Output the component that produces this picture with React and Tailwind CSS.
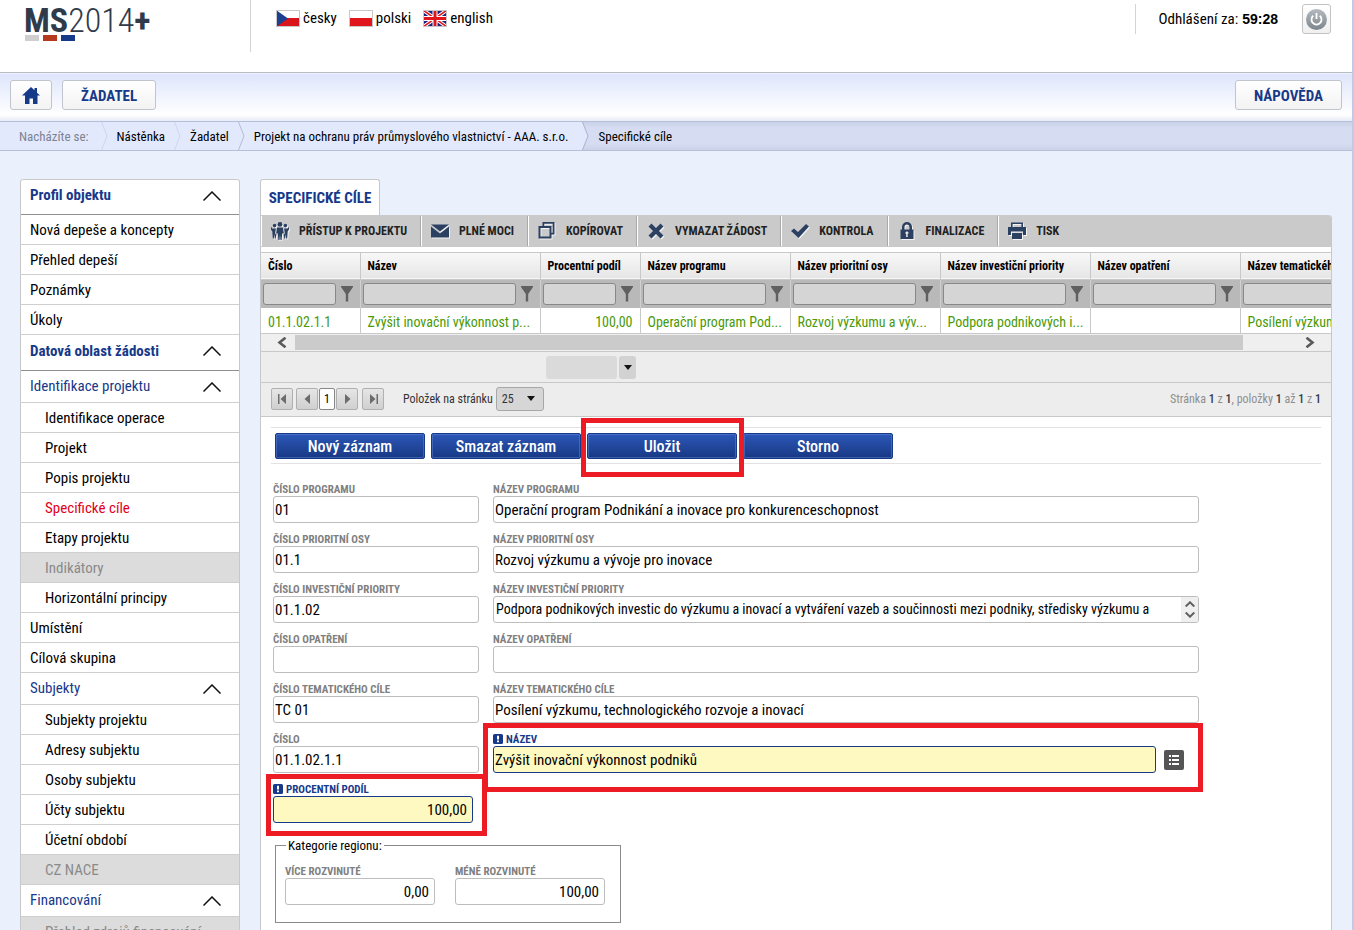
import React from 'react';
import clsx from 'clsx';

const menu = [
    { label: 'Profil objektu', type: 'section' },
    { label: 'Nová depeše a koncepty' },
    { label: 'Přehled depeší' },
    { label: 'Poznámky' },
    { label: 'Úkoly' },
    { label: 'Datová oblast žádosti', type: 'section' },
    { label: 'Identifikace projektu', type: 'group' },
    { label: 'Identifikace operace', nested: true },
    { label: 'Projekt', nested: true },
    { label: 'Popis projektu', nested: true },
    { label: 'Specifické cíle', nested: true, active: true },
    { label: 'Etapy projektu', nested: true },
    { label: 'Indikátory', nested: true, disabled: true },
    { label: 'Horizontální principy', nested: true },
    { label: 'Umístění' },
    { label: 'Cílová skupina' },
    { label: 'Subjekty', type: 'group' },
    { label: 'Subjekty projektu', nested: true },
    { label: 'Adresy subjektu', nested: true },
    { label: 'Osoby subjektu', nested: true },
    { label: 'Účty subjektu', nested: true },
    { label: 'Účetní období', nested: true },
    { label: 'CZ NACE', nested: true, disabled: true },
    { label: 'Financování', type: 'group' },
    { label: 'Přehled zdrojů financování', nested: true, disabled: true },
];

const columns = [
    { title: 'Číslo', width: 'w-[99px]', value: '01.1.02.1.1' },
    { title: 'Název', width: 'w-[180px]', value: 'Zvýšit inovační výkonnost p...' },
    { title: 'Procentní podíl', width: 'w-[100px]', value: '100,00', right: true },
    { title: 'Název programu', width: 'w-[150px]', value: 'Operační program Pod...' },
    { title: 'Název prioritní osy', width: 'w-[150px]', value: 'Rozvoj výzkumu a výv...' },
    { title: 'Název investiční priority', width: 'w-[150px]', value: 'Podpora podnikových i...' },
    { title: 'Název opatření', width: 'w-[150px]', value: '' },
    { title: 'Název tematického cíle', width: 'w-[150px]', value: 'Posílení výzkumu, te...' },
];

const PeopleIcon = () => (
    <>
        <circle cx="9" cy="2.4" r="2.4" />
        <circle cx="3.6" cy="3.6" r="1.8" />
        <circle cx="14.4" cy="3.6" r="1.8" />
        <path d="M6 5.5h6l.8 6h-1.6L10.6 18H9.5l-.5-5-.5 5H7.4l-.6-6.5H5.200z" />
        <path d="M0 4.500l1.200 2h3.600l-.6 5 1.200 1-.7 4H3.800L3.300 12l-.5 4.500h-1L1.300 9.500 0 7.500z" />
        <path d="M18 4.500l-1.200 2h-3.600l.6 5-1.200 1 .7 4h.9l.5-4.500.5 4.500h1l.5-7 1.300-2z" />
    </>
);

const toolbar = [
    { label: 'PŘÍSTUP K PROJEKTU', icon: <PeopleIcon /> },
    { label: 'PLNÉ MOCI', icon: <><path d="M0 2.500h18l-9 7z" /><path d="M0 4.500l9 7 9-7V15.500H0z" /></> },
    { label: 'KOPÍROVAT', icon: <path fillRule="evenodd" d="M4.500 0H16.500V12.500H13.500V16.500H.5V4H4.500zM6.300 1.800V4H13.500V10.700H14.700V1.800zM2.500 6V14.500H11.500V6z" /> },
    { label: 'VYMAZAT ŽÁDOST', icon: <path d="M4.500 1.500L9 6l4.500-4.500L16.500 4.500 12 9l4.500 4.500-3 3L9 12l-4.500 4.500-3-3L6 9 1.500 4.500z" /> },
    { label: 'KONTROLA', icon: <path d="M0 9l3-2.500 4 3.500L15 2l3 2.500L7.500 16z" /> },
    { label: 'FINALIZACE', icon: <path fillRule="evenodd" d="M2.500 7.500H4V5a5 5 0 0110 0v2.500h1.500V17h-13zM6.500 7.500h5V5a2.500 2.500 0 00-5 0zM9 9.500a1.500 1.500 0 00-.8 2.800V15h1.600v-2.700A1.500 1.500 0 009 9.500z" /> },
    { label: 'TISK', icon: <path fillRule="evenodd" d="M3 0.500h12V5h3v8h-3V9.500H3V13H0V5h3zM4.600 2V5h8.800V2zM4 11h10v6H4z" /> },
];

const formRows = [
    ['ČÍSLO PROGRAMU', '01', 'NÁZEV PROGRAMU', 'Operační program Podnikání a inovace pro konkurenceschopnost'],
    ['ČÍSLO PRIORITNÍ OSY', '01.1', 'NÁZEV PRIORITNÍ OSY', 'Rozvoj výzkumu a vývoje pro inovace'],
    ['ČÍSLO INVESTIČNÍ PRIORITY', '01.1.02', 'NÁZEV INVESTIČNÍ PRIORITY', 'Podpora podnikových investic do výzkumu a inovací a vytváření vazeb a součinnosti mezi podniky, středisky výzkumu a', true],
    ['ČÍSLO OPATŘENÍ', '', 'NÁZEV OPATŘENÍ', ''],
    ['ČÍSLO TEMATICKÉHO CÍLE', 'TC 01', 'NÁZEV TEMATICKÉHO CÍLE', 'Posílení výzkumu, technologického rozvoje a inovací'],
];

const Highlight = ({ className }) => (
    <div className={clsx('pointer-events-none absolute z-10 border-[5px] border-[#ed1c24]', className)} />
);

const Flag = ({ children }) => (
    <svg width="24" height="17" viewBox="0 0 24 17" className="shrink-0">
        {children}
        <rect x=".5" y=".5" width="23" height="16" fill="none" stroke="#c8c8c8" />
    </svg>
);

const Header = () => (
    <header className="flex h-[73px] items-start justify-between border-b border-[#b7bcc3] bg-white">
        <div className="flex">
            <div className="h-[52px] w-[251px] border-r border-[#d4d4d4] pl-6">
                <h1 className="flex h-[35px] items-center pt-[5px] text-[34px] leading-none text-[#2f3b4b]">
                    <b>MS</b>
                    <span className="font-light">2014</span>
                    <b>+</b>
                </h1>
                <div className="flex gap-1 pl-px">
                    <i className="h-1.5 w-3.5 bg-[#d0cecf]" />
                    <i className="h-1.5 w-3.5 bg-[#b5391e]" />
                    <i className="h-1.5 w-3.5 bg-[#163a8a]" />
                </div>
            </div>
            <nav className="flex h-9 items-center gap-3 pl-[25px] text-[15px]">
                <a href="#cs" className="flex items-center gap-[3px]">
                    <Flag>
                        <path fill="#fff" d="M0 0h24v8H0z" />
                        <path fill="#d9151b" d="M0 8h24v9H0z" />
                        <path fill="#1c3f8f" d="M0 0l12 8.500L0 17z" />
                    </Flag>
                    česky
                </a>
                <a href="#pl" className="flex items-center gap-[3px]">
                    <Flag>
                        <path fill="#fff" d="M0 0h24v8H0z" />
                        <path fill="#e0161c" d="M0 8h24v9H0z" />
                    </Flag>
                    polski
                </a>
                <a href="#en" className="flex items-center gap-[3px]">
                    <Flag>
                        <path fill="#1a237e" d="M0 0h24v17H0z" />
                        <path stroke="#fff" strokeWidth="3.500" d="M0 0l24 17M24 0L0 17" />
                        <path stroke="#e0161c" strokeWidth="1.500" d="M0 0l24 17M24 0L0 17" />
                        <path stroke="#fff" strokeWidth="5" d="M12 0v17M0 8.500h24" />
                        <path stroke="#e0161c" strokeWidth="3" d="M12 0v17M0 8.500h24" />
                    </Flag>
                    english
                </a>
            </nav>
        </div>
        <div className="mt-1 mr-[21px] flex h-[30px] items-center border-l border-[#d4d4d4] pl-[22px] text-[15px]">
            <span className="mr-1">Odhlášení za:</span>
            <b className="font-['Liberation_Sans',sans-serif] text-[14px]">59:28</b>
            <button aria-label="Odhlásit" className="ml-6 flex h-[30px] w-[29px] items-center justify-center rounded-[3px] border border-[#c3c3c3] bg-linear-to-b from-white to-[#f0f0f0]">
                <svg width="21" height="21" viewBox="0 0 21 21" fill="none">
                    <defs>
                        <linearGradient id="power" x1="0" y1="0" x2="0" y2="1">
                            <stop stopColor="#b4babf" />
                            <stop offset="1" stopColor="#7d868d" />
                        </linearGradient>
                    </defs>
                    <circle cx="10.500" cy="10.500" r="10.500" fill="url(#power)" />
                    <path d="M7.300 6.700a5 5 0 106.400 0M10.500 4v6" stroke="#fff" strokeWidth="1.800" />
                </svg>
            </button>
        </div>
    </header>
);

const navButton = 'flex h-[30px] items-center justify-center rounded-[3px] border border-[#c0c4cc] bg-linear-to-b from-white to-[#f3f3f3] text-[15px] font-bold text-[#17398a]';

const TopNav = () => (
    <nav className="flex h-[49px] items-start justify-between border-b border-[#b6bfd9] bg-[linear-gradient(#fff_0,#dfe6fc_1px,#fff_42px,#e8ebf7_48px)] px-2.5 pt-[7px]">
        <div className="flex gap-2.5">
            <button aria-label="Domů" className={clsx(navButton, 'w-[42px]')}>
                <svg width="18" height="17" viewBox="0 0 18 17" fill="currentColor">
                    <path d="M9 0l3.500 3.300V1H15v4.700L18 8.500h-2.500V17H11v-5.500H7.500V17H3V8.500H0z" />
                </svg>
            </button>
            <button className={clsx(navButton, 'px-[18px] pt-0.5')}>ŽADATEL</button>
        </div>
        <button className={clsx(navButton, 'px-[18px] pt-0.5')}>NÁPOVĚDA</button>
    </nav>
);

const Sep = ({ dark }) => (
    <svg width="7" height="28" viewBox="0 0 7 28" fill="none" className="mx-[9px]" stroke={dark ? '#b3bbd3' : '#cdd5ec'}>
        <path d="M.5 0l5.500 14L.5 28" />
    </svg>
);

const Breadcrumbs = () => (
    <div className="flex h-[29px] border-b border-[#b6bfd9] bg-[linear-gradient(#c9d1e8,#d6ddf2_6px,#d6ddf2_22px,#cbd2e7)] text-[13px] leading-7">
        <div className="flex bg-[#e3e9fd] pl-[19px] [&>*]:not-[svg]:pt-px">
            <span className="mr-[3px] text-[#7c8290]">Nacházíte se:</span>
            <Sep />
            <a href="#nastenka">Nástěnka</a>
            <Sep />
            <a href="#zadatel">Žadatel</a>
            <Sep dark />
            <a href="#projekt">Projekt na ochranu práv průmyslového vlastnictví - AAA. s.r.o.</a>
            <span className="w-3.5" />
        </div>
        <svg width="7" height="28" viewBox="0 0 7 28" fill="none" className="mr-[9px]">
            <path d="M0 0h.5L6 14 .5 28H0z" fill="#e3e9fd" />
            <path d="M.5 0L6 14 .5 28" stroke="#a9b3cf" />
        </svg>
        <span className="pt-px">Specifické cíle</span>
    </div>
);

const Chevron = () => (
    <svg width="18" height="10" viewBox="0 0 18 10" fill="none" stroke="#111" strokeWidth="1.500">
        <path d="M.5 9.500L9 1l8.500 8.500" />
    </svg>
);

const Sidebar = () => (
    <ul className="w-[220px] shrink-0 rounded-t-[3px] border-x border-[#c8c8c8] bg-white text-[15px]">
        {menu.map(({ label, type, nested, active, disabled }) => (
            <li
                key={label}
                className={clsx(
                    'border-b first:rounded-t-[3px] first:border-t first:border-t-[#c8c8c8]',
                    type === 'section' ? 'h-9 border-b-[#8f8f8f]' : 'border-b-[#cfcfcf]',
                    type === 'group' && 'h-8',
                    !type && 'h-[30px]',
                    disabled && 'bg-[#dcdcdc]'
                )}
            >
                {type ? (
                    <button
                        className={clsx(
                            'flex h-full w-full items-center justify-between pr-[18px] pl-[9px] text-[#17398a]',
                            type === 'section' && 'pb-[3px] font-bold'
                        )}
                    >
                        {label}
                        <Chevron />
                    </button>
                ) : (
                    <a
                        href="#menu"
                        className={clsx(
                            'flex h-full items-center pt-0.5',
                            nested ? 'pl-6' : 'pl-[9px]',
                            active && 'text-[#e2001a]',
                            disabled && 'text-[#8a8a8a]'
                        )}
                    >
                        {label}
                    </a>
                )}
            </li>
        ))}
    </ul>
);

const Toolbar = () => (
    <div className="flex h-8 rounded-tr-[3px] bg-[#cacaca]">
        {toolbar.map(({ label, icon }) => (
            <button
                key={label}
                className="my-px flex items-center gap-2.5 border-r border-l border-r-[#a9a9a9] border-l-white pr-[13px] pl-[9px] text-[12px] font-bold text-[#222] last:border-r-0"
            >
                <svg width="18" height="18" viewBox="0 0 18 18" fill="#2c4061" className="drop-shadow-[1px_1px_0_#f4f4f4]">
                    {icon}
                </svg>
                {label}
            </button>
        ))}
    </div>
);

const Grid = () => (
    <div className="overflow-hidden border-y border-[#c8c8c8]">
        <table className="w-[1129px] table-fixed border-collapse text-left">
            <thead>
                <tr className="h-[26px] border-b border-[#c8c8c8] bg-linear-to-b from-[#f8f8f8] to-[#e6e6e6]">
                    {columns.map((c) => (
                        <th key={c.title} className={clsx(c.width, 'border-r border-[#c8c8c8] py-0 pl-[7px] text-[12px] whitespace-nowrap')}>
                            {c.title}
                        </th>
                    ))}
                </tr>
                <tr className="h-[29px] bg-[#b9b9b9]">
                    {columns.map((c) => (
                        <td key={c.title} className="border-r border-[#d0d0d0] p-0">
                            <div className="flex items-center pr-[7px] pl-0.5">
                                <input
                                    aria-label={c.title}
                                    className="h-[22px] w-full min-w-0 rounded-[3px] border border-[#888] bg-[#d5d5d5] px-1 text-[13px]"
                                />
                                <svg width="12" height="16" viewBox="0 0 12 16" fill="#606060" className="ml-[5px] shrink-0">
                                    <path d="M0 0h12v1L7.200 8v7.500H4.800V8L0 1z" />
                                </svg>
                            </div>
                        </td>
                    ))}
                </tr>
            </thead>
            <tbody>
                <tr className="h-[25px] bg-white text-[14px] text-[#4a9a08]">
                    {columns.map((c) => (
                        <td key={c.title} className={clsx('border-r border-[#c8c8c8] px-[7px] py-0 pt-0.5 leading-5 whitespace-nowrap', c.right && 'text-right')}>
                            {c.value}
                        </td>
                    ))}
                </tr>
            </tbody>
        </table>
    </div>
);

const ScrollBar = () => (
    <div className="flex h-[18px] items-center border-b border-[#c8c8c8] bg-[#efefef]">
        <button aria-label="Posunout vlevo" className="flex w-[34px] justify-end pr-2">
            <svg width="10" height="11" viewBox="0 0 10 11" fill="none" stroke="#5a5a5a" strokeWidth="2.600">
                <path d="M8.500 .7L2.500 5.500l6 4.800" />
            </svg>
        </button>
        <div className="flex-1">
            <div className="h-[15px] w-[95%] bg-[#cbcbcb]" />
        </div>
        <button aria-label="Posunout vpravo" className="flex w-[38px] justify-start pl-3">
            <svg width="10" height="11" viewBox="0 0 10 11" fill="none" stroke="#5a5a5a" strokeWidth="2.600">
                <path d="M1.500 .7l6 4.800-6 4.800" />
            </svg>
        </button>
    </div>
);

const Arrow = () => (
    <svg width="8" height="5" viewBox="0 0 8 5" fill="#111">
        <path d="M0 0h8L4 5z" />
    </svg>
);

const PageButton = ({ label, d }) => (
    <button aria-label={label} className="flex size-[22px] items-center justify-center rounded-[2px] border border-[#b0b0b0] bg-linear-to-b from-[#e6e6e6] to-[#cfcfcf]">
        <svg width="9" height="10" viewBox="0 0 9 10" fill="#6c6c6c">
            <path d={d} />
        </svg>
    </button>
);

const Pager = () => (
    <>
        <div className="flex h-[31px] items-center gap-0.5 border-b border-[#c8c8c8] bg-[#ededed] pl-[285px]">
            <input aria-label="Souhrn" className="h-[23px] w-[71px] rounded-[3px] bg-[#dadada]" />
            <button aria-label="Vybrat souhrn" className="flex h-[23px] w-[17px] items-center justify-center rounded-[3px] bg-[#d2d2d2]">
                <Arrow />
            </button>
        </div>
        <div className="flex h-[34px] items-center justify-between border-b border-[#c8c8c8] bg-[#ededed] px-2.5 pb-px text-[12px]">
            <div className="flex items-center">
                <div className="mr-[19px] flex items-center">
                    <PageButton label="První strana" d="M0 0h1.500v10H0zM8 0v10L2.500 5z" />
                    <div className="mr-1 ml-[3px] flex">
                        <PageButton label="Předchozí strana" d="M7 0v10L1.500 5z" />
                        <button className="mx-px h-[22px] w-4 rounded-[2px] border border-[#888] bg-white">1</button>
                        <PageButton label="Další strana" d="M2 0v10L7.500 5z" />
                    </div>
                    <PageButton label="Poslední strana" d="M1 0v10L6.500 5zM7.500 0H9v10H7.500z" />
                </div>
                <label htmlFor="pageSize" className="mr-[3px] text-[#333]">Položek na stránku</label>
                <div className="relative">
                    <select id="pageSize" className="block h-6 w-12 appearance-none rounded-[3px] border border-[#a8a8a8] bg-[#d6d6d6] pl-[5px] text-[12px] text-[#333]">
                        <option>25</option>
                    </select>
                    <span className="pointer-events-none absolute top-[9px] right-[9px]">
                        <Arrow />
                    </span>
                </div>
            </div>
            <div className="text-[#8f8f8f] [&_b]:font-medium [&_b]:text-[#333a45]">
                Stránka <b>1</b> z <b>1</b>, položky <b>1</b> až <b>1</b> z <b>1</b>
            </div>
        </div>
    </>
);

const Field = ({ id, label, value, required, right, multiline, className, children }) => (
    <div className={clsx('relative', className)}>
        <label
            htmlFor={id}
            className={clsx('flex h-3.5 items-center text-[11px] leading-none font-bold', required ? 'gap-[3px] text-[#17398a]' : 'text-[#808080]')}
        >
            {required && (
                <svg width="10" height="10" viewBox="0 0 10 10">
                    <rect width="10" height="10" rx="1.500" fill="#17398a" />
                    <path d="M4 1.800h2v3.800H4zM4 6.600h2v1.700H4z" fill="#fff" />
                </svg>
            )}
            {label}
        </label>
        {multiline ? (
            <div className="flex h-[27px] overflow-hidden rounded-[3px] border border-[#bdbdbd]">
                <textarea id={id} rows={1} defaultValue={value} className="h-[25px] min-w-0 flex-1 resize-none overflow-hidden pl-0.5 text-[14px] leading-[25px]" />
                <div className="flex w-[17px] flex-col items-center justify-between bg-[#efefef] py-1">
                    <svg width="10" height="6" viewBox="0 0 10 6" fill="none" stroke="#606060" strokeWidth="2"><path d="M.7 5.500L5 1.300l4.300 4.200" /></svg>
                    <svg width="10" height="6" viewBox="0 0 10 6" fill="none" stroke="#606060" strokeWidth="2"><path d="M.7 .5L5 4.700 9.300 .5" /></svg>
                </div>
            </div>
        ) : (
            <div className="flex items-center gap-2">
                <input
                    id={id}
                    defaultValue={value}
                    className={clsx(
                        'h-[27px] w-full min-w-0 rounded-[3px] border text-[15px]',
                        required ? 'border-[#17398a] bg-[#fef9c0]' : 'border-[#bdbdbd] bg-white',
                        right ? 'pr-[5px] text-right' : 'pl-px'
                    )}
                />
                {children}
            </div>
        )}
    </div>
);

const ActionButton = ({ children }) => (
    <button className="h-[26px] w-[150px] rounded-[2px] border border-[#17398a] bg-linear-to-b from-[#2c58b8] to-[#183884] pt-0.5 text-[16px] leading-none font-medium text-white inset-ring inset-ring-[#5f83cf]/50">
        {children}
    </button>
);

const Form = () => (
    <div className="px-2.5 pt-2.5">
        <div className="flex gap-1.5 border-y border-[#e2e2e2] pt-[5px] pb-1 pl-1">
            <ActionButton>Nový záznam</ActionButton>
            <ActionButton>Smazat záznam</ActionButton>
            <div className="relative">
                <ActionButton>Uložit</ActionButton>
                <Highlight className="-top-[15px] -right-[7px] -bottom-[18px] -left-1.5" />
            </div>
            <ActionButton>Storno</ActionButton>
        </div>
        <div className="mt-[18px] flex flex-col gap-[9px] pl-0.5">
            {formRows.map(([codeLabel, code, nameLabel, name, multiline], i) => (
                <div key={codeLabel} className="flex gap-3.5">
                    <Field id={`code${i}`} label={codeLabel} value={code} className="w-[206px]" />
                    <Field id={`name${i}`} label={nameLabel} value={name} multiline={multiline} className="max-w-[706px] flex-1" />
                </div>
            ))}
            <div className="flex gap-3.5">
                <Field id="cislo" label="ČÍSLO" value="01.1.02.1.1" className="w-[206px]" />
                <Field id="nazev" label="NÁZEV" value="Zvýšit inovační výkonnost podniků" required className="max-w-[691px] flex-1">
                    <button aria-label="Vybrat název" className="flex size-5 shrink-0 items-center justify-center rounded-[2px] bg-[#555]">
                        <svg width="10" height="10" viewBox="0 0 10 10" fill="#fff">
                            <path d="M0 0h2v2H0zM3 0h7v2H3zM0 4h2v2H0zM3 4h7v2H3zM0 8h2v2H0zM3 8h7v2H3z" />
                        </svg>
                    </button>
                    <Highlight className="-top-[9px] -right-[19px] -bottom-[19px] -left-2.5" />
                </Field>
            </div>
            <Field id="podil" label="PROCENTNÍ PODÍL" value="100,00" required right className="w-[200px]">
                <Highlight className="-top-2 -right-[14px] -bottom-[13px] -left-[7px]" />
            </Field>
        </div>
        <fieldset className="mt-[15px] ml-1 h-[85px] w-[346px] border border-[#8a8a8a] pl-[9px]">
            <legend className="ml-px px-0.5 text-[13px] leading-[15px]">Kategorie regionu:</legend>
            <div className="mt-[11px] flex gap-5">
                <Field id="vice" label="VÍCE ROZVINUTÉ" value="0,00" right className="w-[150px]" />
                <Field id="mene" label="MÉNĚ ROZVINUTÉ" value="100,00" right className="w-[150px]" />
            </div>
        </fieldset>
    </div>
);

function App() {
    return (
        <div className="flex h-screen flex-col overflow-hidden border-r-2 border-[#c3cae3] bg-[#ebf0fd] font-['Roboto_Condensed','Liberation_Sans_Narrow',Roboto,sans-serif] text-black">
            <Header />
            <TopNav />
            <Breadcrumbs />
            <div className="flex min-h-0 flex-1 gap-5 pt-7 pr-5 pl-5">
                <Sidebar />
                <main className="flex min-w-0 flex-1 flex-col">
                    <h2 className="flex h-9 w-[120px] shrink-0 items-center justify-center rounded-t-[3px] border border-b-0 border-[#c8c8c8] bg-white pt-px text-[15px] font-bold whitespace-nowrap text-[#17398a]">
                        SPECIFICKÉ CÍLE
                    </h2>
                    <div className="min-h-0 flex-1 rounded-tr-[3px] border-x border-[#c8c8c8] bg-white">
                        <Toolbar />
                        <div className="mt-[5px]">
                            <Grid />
                        </div>
                        <ScrollBar />
                        <Pager />
                        <Form />
                    </div>
                </main>
            </div>
        </div>
    );
}

export default App;
